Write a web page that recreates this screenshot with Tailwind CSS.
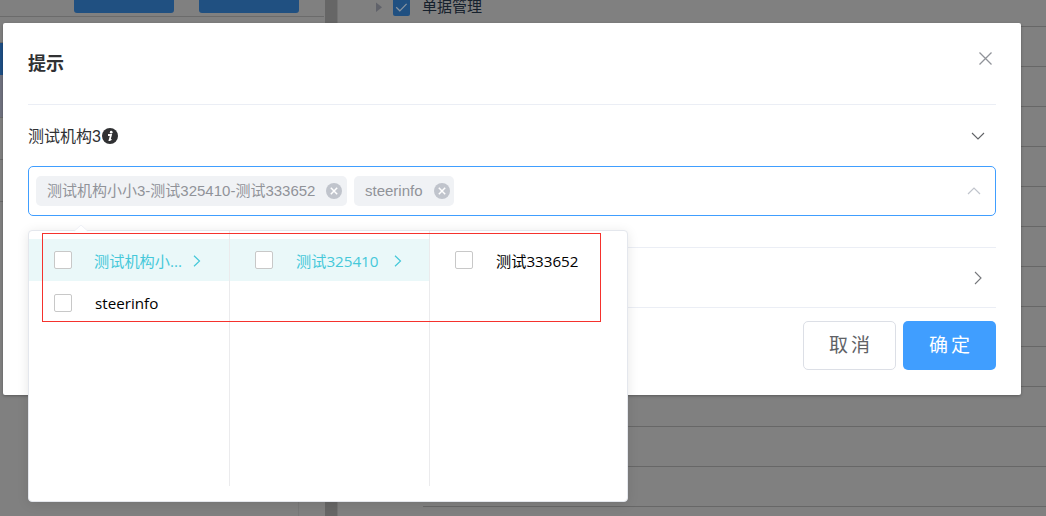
<!DOCTYPE html>
<html lang="zh-CN">
<head>
  <meta charset="UTF-8">
  <meta name="viewport" content="width=device-width, initial-scale=1.0">
  <title>提示</title>
  <script src="https://cdn.jsdelivr.net/npm/@tailwindcss/browser@4"></script>
  <style>
    body { font-family: "Liberation Sans", "Noto Sans CJK SC", sans-serif; }
    .font-menu { font-family: "Open Sans", "Noto Sans CJK SC", sans-serif; }
  </style>
</head>
<body class="relative w-[1046px] h-[516px] overflow-hidden bg-[#808080]">

  <!-- Page behind the dialog (dimmed) -->
  <div class="flex h-full">
    <div class="w-[325px] flex flex-col">
      <div class="h-[17px] w-[324px] shrink-0 border-b border-[#6b6b6b] flex gap-[25px] pl-[74px]">
        <div class="w-[100px] h-[13px] bg-[#205081] rounded-b-[3px]"></div>
        <div class="w-[100px] h-[13px] bg-[#205081] rounded-b-[3px]"></div>
      </div>
      <div class="h-[26px] shrink-0 border-b border-[#6b6b6b]"></div>
      <div class="h-[32px] shrink-0 bg-[#1e4f85]"></div>
      <div class="h-[43px] shrink-0 bg-[#70727f] border-b border-[#6b6b6b]"></div>
      <div class="h-[42px] shrink-0 border-b border-[#6b6b6b]"></div>
      <div class="h-[42px] shrink-0 border-b border-[#6b6b6b]"></div>
      <div class="grow w-[299px] border-r border-[#787878]"></div>
    </div>
    <div class="w-[13px] bg-[#666666] border-r border-[#747474]"></div>
    <div class="grow pl-[37px]">
      <div class="h-[27px] flex items-start">
        <svg class="mt-[2px] w-[8px] h-[10px]" viewBox="0 0 8 10"><path d="M1 0.5 L7 5.2 L1 10z" fill="#60626a"/></svg>
        <div class="ml-[10px] w-[17px] h-[16px] bg-[#205081] rounded-b-[2px]">
          <svg class="w-[17px] h-[16px]" viewBox="0 0 17 16" fill="none" stroke="#8a95a1" stroke-width="1.2"><path d="M3.2 7.3 L6.8 10.8 L13.6 3.8"/></svg>
        </div>
        <div class="ml-3 grow self-stretch border-b border-[#676767] text-[15px] leading-[14px] text-[#16212d]">单据管理</div>
      </div>
      <div class="ml-[48px]">
        <div class="h-10 border-b border-[#676767]"></div>
        <div class="h-10 border-b border-[#676767]"></div>
        <div class="h-10 border-b border-[#676767]"></div>
        <div class="h-10 border-b border-[#676767]"></div>
        <div class="h-10 border-b border-[#676767]"></div>
        <div class="h-10 border-b border-[#676767]"></div>
        <div class="h-10 border-b border-[#676767]"></div>
        <div class="h-10 border-b border-[#676767]"></div>
        <div class="h-10 border-b border-[#676767]"></div>
        <div class="h-10 border-b border-[#676767]"></div>
        <div class="h-10 border-b border-[#676767]"></div>
        <div class="h-10 border-b border-[#676767]"></div>
      </div>
    </div>
  </div>

  <!-- Dialog -->
  <div class="absolute left-[3px] top-[23px] w-[1018px] h-[372px] px-[25px] bg-white rounded-[2px] shadow-[0_1px_3px_rgba(0,0,0,0.3)]">
    <div class="h-[82px] flex justify-between border-b border-[#ebeef5]">
      <h3 class="mt-[27px] text-[18px] leading-7 font-bold text-[#303133]">提示</h3>
      <svg class="mt-[28px] mr-[3px] w-[15px] h-[15px]" viewBox="0 0 15 15" fill="none" stroke="#909399" stroke-width="1.3"><path d="M1.5 1.5 L13.5 13.5 M13.5 1.5 L1.5 13.5"/></svg>
    </div>

    <div class="h-[61px] flex items-center justify-between text-[16px] text-[#303133]">
      <div class="flex items-center">
        <span class="w-[74px] pt-[2px]">测试机构3</span>
        <svg class="w-4 h-4" viewBox="0 0 16 16">
          <circle cx="8" cy="8" r="8" fill="#303133"/>
          <circle cx="9.2" cy="4.2" r="1.35" fill="#fff"/>
          <path d="M6 7 H9 L7.6 12 Q8.5 12 9.3 11.2" fill="none" stroke="#fff" stroke-width="1.8"/>
        </svg>
      </div>
      <svg class="mr-[11px] w-[14px] h-[8px]" viewBox="0 0 14 8" fill="none" stroke="#606266" stroke-width="1.1"><path d="M1 1 L7 7 L13 1"/></svg>
    </div>

    <!-- Cascader input -->
    <div class="h-[50px] border border-[#409eff] rounded-[5px] flex items-center pl-[7px] pr-[14px] gap-[7px] text-[15px] text-[#909399]">
      <div class="w-[311px] h-[30px] bg-[#f0f2f5] rounded-[5px] flex items-center justify-between pl-[11px] pr-[5px] whitespace-nowrap">
        <span>测试机构小小3-测试325410-测试333652</span>
        <svg class="w-4 h-4 shrink-0" viewBox="0 0 16 16"><circle cx="8" cy="8" r="8" fill="#c0c4cc"/><path d="M4.8 4.8 L11.2 11.2 M11.2 4.8 L4.8 11.2" stroke="#fff" stroke-width="1.5"/></svg>
      </div>
      <div class="w-[100px] h-[30px] bg-[#f0f2f5] rounded-[5px] flex items-center justify-between pl-[11px] pr-[4px]">
        <span>steerinfo</span>
        <svg class="w-4 h-4 shrink-0" viewBox="0 0 16 16"><circle cx="8" cy="8" r="8" fill="#c0c4cc"/><path d="M4.8 4.8 L11.2 11.2 M11.2 4.8 L4.8 11.2" stroke="#fff" stroke-width="1.5"/></svg>
      </div>
      <svg class="ml-auto w-[14px] h-[8px]" viewBox="0 0 14 8" fill="none" stroke="#c0c4cc" stroke-width="1.2"><path d="M1 7 L7 1 L13 7"/></svg>
    </div>

    <div class="h-[32px] border-b border-[#ebeef5]"></div>
    <div class="h-[60px] border-b border-[#ebeef5] flex items-center justify-end">
      <svg class="mr-[14px] w-[8px] h-[14px]" viewBox="0 0 8 14" fill="none" stroke="#75777b" stroke-width="1.1"><path d="M1 1 L7 7 L1 13"/></svg>
    </div>

    <div class="mt-[13px] flex justify-end gap-[7px] text-[19px] tracking-[3px]">
      <button class="w-[93px] h-[49px] pl-[3px] pt-[2px] rounded-[5px] border border-[#dcdfe6] text-[#606266]">取消</button>
      <button class="w-[93px] h-[49px] pl-[3px] pt-[2px] rounded-[5px] bg-[#409eff] text-white">确定</button>
    </div>
  </div>

  <!-- Cascader dropdown -->
  <div class="font-menu absolute left-[28px] top-[230px] w-[600px] h-[272px] bg-white border border-[#e4e7ed] rounded-[4px] shadow-[0_2px_12px_rgba(0,0,0,0.1)] text-[15.2px] text-black">
    <svg class="absolute left-[45px] -top-[7px] w-[14px] h-[8px]" viewBox="0 0 14 8"><path d="M0.5 7 L7 1 L13.5 7 V8 H0.5z" fill="#fff"/><path d="M0.5 7 L7 1 L13.5 7" fill="none" stroke="#ebeef5" stroke-width="0.8"/></svg>
    <div class="flex h-[255px]">
      <div class="w-[201px] pt-2 border-r border-[#ebebed]">
        <div class="h-[42px] pl-[25px] flex items-center bg-[#eaf8f9] text-[#45c8d9]">
          <span class="w-[18px] h-[18px] bg-white border border-[#c8c8c8] rounded-[2px]"></span>
          <span class="ml-[22px] w-[99px] pt-[2px]">测试机构小...</span>
          <svg class="mt-[2px] w-[8px] h-[12px]" viewBox="0 0 8 12" fill="none" stroke="#45c8d9" stroke-width="1.2"><path d="M1 0.8 L6.5 6 L1 11.2"/></svg>
        </div>
        <div class="h-[43px] pl-[25px] flex items-center">
          <span class="w-[18px] h-[18px] bg-white border border-[#c8c8c8] rounded-[2px]"></span>
          <span class="ml-[23px] pt-[2px]">steerinfo</span>
        </div>
      </div>
      <div class="w-[200px] pt-2 border-r border-[#ebebed]">
        <div class="h-[42px] pl-[25px] flex items-center bg-[#eaf8f9] text-[#45c8d9]">
          <span class="w-[18px] h-[18px] bg-white border border-[#c8c8c8] rounded-[2px]"></span>
          <span class="ml-[23px] w-[98px] pt-[2px]">测试325410</span>
          <svg class="mt-[2px] w-[8px] h-[12px]" viewBox="0 0 8 12" fill="none" stroke="#45c8d9" stroke-width="1.2"><path d="M1 0.8 L6.5 6 L1 11.2"/></svg>
        </div>
      </div>
      <div class="pt-2">
        <div class="h-[42px] pl-[25px] flex items-center">
          <span class="w-[18px] h-[18px] bg-white border border-[#c8c8c8] rounded-[2px]"></span>
          <span class="ml-[23px] pt-[2px]">测试333652</span>
        </div>
      </div>
    </div>
  </div>

  <!-- Red marker frame -->
  <div class="absolute left-[42px] top-[233px] w-[559px] h-[89px] border border-[#f5322d]"></div>

</body>
</html>
